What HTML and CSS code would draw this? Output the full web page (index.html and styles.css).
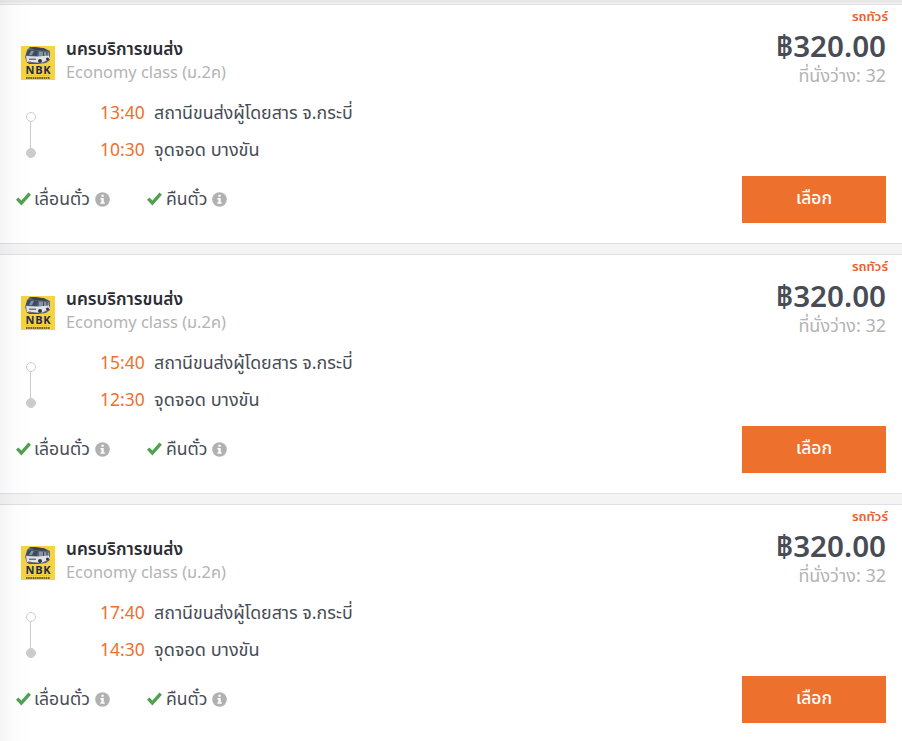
FILE: index.html
```
<!DOCTYPE html>
<html lang="th">
  <head>
    <meta charset="utf-8">
    <title>นครบริการขนส่ง</title>
    <link rel="stylesheet" href="styles.css">
  </head>
  <body>
    <svg class="symbols" width="0" height="0">
      <symbol id="logo" viewBox="0 0 34 34">
        <rect width="34" height="34" fill="#f6d342"/>
        <path d="M6 4 9 1 23 2 29 5 29 14 25 17 17 18 6 17 4 11z" fill="#5b6674"/>
        <path d="M8 1.5 14 1 23 2.5 27 5 14 4z" fill="#39414f"/>
        <path d="M7 4 17 5 16 10 5 9z" fill="#3b4a5f"/>
        <path d="M10 5 13 5 11 9 8 9z" fill="#8493a3"/>
        <path d="M18 5.500 28 6.500 28 9.500 18 10z" fill="#8796a5"/>
        <path d="M22 6h1v4h-1zM25.500 6h1v4h-1z" fill="#38455a"/>
        <path d="M5 10 16 10.500 28 9.500 29 13 20 17 6 16z" fill="#e2e3e5"/>
        <path d="M8 12.500h7v1.500H8z" fill="#6b7684"/>
        <path d="M6 16 18 17v1H8z" fill="#4d505b"/>
        <circle cx="19" cy="15" r="2" fill="#2e3443"/>
        <circle cx="26.500" cy="13" r="1.500" fill="#2e3443"/>
        <path d="M7 15.500h3v1H7z" fill="#d05d35"/>
        <text x="4.500" y="28" class="logo-name" textLength="25">NBK</text>
        <path d="M5 29.500h24" stroke="#d6b844" stroke-width=".6"/>
        <path d="M5 32h24" stroke="#6b6040" stroke-width="1.800" stroke-dasharray="1.600 .6"/>
      </symbol>
      <symbol id="check" viewBox="0 0 15 14">
        <path d="M0 7.800 2.400 5.400 5.400 8.400 12.400 .6 15 2.800 5.400 13.400z" fill="#4fa34f"/>
      </symbol>
      <symbol id="info" viewBox="0 0 15 15">
        <circle cx="7.500" cy="7.500" r="7.300" fill="#b1b1b1"/>
        <path d="M6.400 2.700h2.300v2H6.400zM5.400 5.900h3.300v4.400h1v1.500H5.400v-1.500h1V7.400h-1z" fill="#fff"/>
      </symbol>
    </svg>

    <div class="trip">
      <div class="trip-info">
        <div class="company">
          <svg class="logo"><use href="#logo"/></svg>
          <div>
            <div class="company-name"><span>นครบริการขนส่ง</span></div>
            <div class="bus-class">Economy class (ม.2ค)</div>
          </div>
        </div>
        <div class="route">
          <div class="line"></div>
          <dl class="stops">
            <dt>13:40</dt>
            <dd class="from">สถานีขนส่งผู้โดยสาร จ.กระบี่</dd>
            <dt>10:30</dt>
            <dd class="to">จุดจอด บางขัน</dd>
          </dl>
        </div>
        <div class="options">
          <div class="option move"><svg class="check"><use href="#check"/></svg><span>เลื่อนตั๋ว</span><svg class="info"><use href="#info"/></svg></div>
          <div class="option refund"><svg class="check"><use href="#check"/></svg><span>คืนตั๋ว</span><svg class="info"><use href="#info"/></svg></div>
        </div>
      </div>
      <div class="trip-price">
        <div class="bus-type">รถทัวร์</div>
        <div class="price">฿320.00</div>
        <div class="seats">ที่นั่งว่าง: 32</div>
        <button type="button">เลือก</button>
      </div>
    </div>

    <div class="trip">
      <div class="trip-info">
        <div class="company">
          <svg class="logo"><use href="#logo"/></svg>
          <div>
            <div class="company-name"><span>นครบริการขนส่ง</span></div>
            <div class="bus-class">Economy class (ม.2ค)</div>
          </div>
        </div>
        <div class="route">
          <div class="line"></div>
          <dl class="stops">
            <dt>15:40</dt>
            <dd class="from">สถานีขนส่งผู้โดยสาร จ.กระบี่</dd>
            <dt>12:30</dt>
            <dd class="to">จุดจอด บางขัน</dd>
          </dl>
        </div>
        <div class="options">
          <div class="option move"><svg class="check"><use href="#check"/></svg><span>เลื่อนตั๋ว</span><svg class="info"><use href="#info"/></svg></div>
          <div class="option refund"><svg class="check"><use href="#check"/></svg><span>คืนตั๋ว</span><svg class="info"><use href="#info"/></svg></div>
        </div>
      </div>
      <div class="trip-price">
        <div class="bus-type">รถทัวร์</div>
        <div class="price">฿320.00</div>
        <div class="seats">ที่นั่งว่าง: 32</div>
        <button type="button">เลือก</button>
      </div>
    </div>

    <div class="trip">
      <div class="trip-info">
        <div class="company">
          <svg class="logo"><use href="#logo"/></svg>
          <div>
            <div class="company-name"><span>นครบริการขนส่ง</span></div>
            <div class="bus-class">Economy class (ม.2ค)</div>
          </div>
        </div>
        <div class="route">
          <div class="line"></div>
          <dl class="stops">
            <dt>17:40</dt>
            <dd class="from">สถานีขนส่งผู้โดยสาร จ.กระบี่</dd>
            <dt>14:30</dt>
            <dd class="to">จุดจอด บางขัน</dd>
          </dl>
        </div>
        <div class="options">
          <div class="option move"><svg class="check"><use href="#check"/></svg><span>เลื่อนตั๋ว</span><svg class="info"><use href="#info"/></svg></div>
          <div class="option refund"><svg class="check"><use href="#check"/></svg><span>คืนตั๋ว</span><svg class="info"><use href="#info"/></svg></div>
        </div>
      </div>
      <div class="trip-price">
        <div class="bus-type">รถทัวร์</div>
        <div class="price">฿320.00</div>
        <div class="seats">ที่นั่งว่าง: 32</div>
        <button type="button">เลือก</button>
      </div>
    </div>
  </body>
</html>
```
FILE: styles.css
```
*,
*::before,
*::after {
  box-sizing: border-box;
}

html {
  overflow: hidden;
}

body {
  margin: 0;
  padding-top: 4px;
  height: 741px;
  overflow: hidden;
  background: linear-gradient(#e8e8e8, #e8e8e8) 0 0 / 100% 3px no-repeat #f4f4f4;
  color: #474c55;
  font-family: "Noto Sans", "Noto Sans Thai", sans-serif;
  font-size: 17px;
}

/* soft shadow falling in from the left column */
body::after {
  content: "";
  position: absolute;
  top: 0;
  left: 0;
  width: 36px;
  height: 741px;
  background: linear-gradient(to right, rgba(0, 0, 0, .04), rgba(0, 0, 0, .012) 40%, rgba(0, 0, 0, 0));
  pointer-events: none;
}

.symbols {
  display: none;
}

.trip {
  display: flex;
  justify-content: space-between;
  height: 240px;
  margin-bottom: 10px;
  border-top: 1px solid #dfdfe5;
  border-bottom: 1px solid #dfdfe5;
  background: #fff;
  white-space: nowrap;
}

.trip-info {
  padding: 32px 0 0 16px;
}

.company {
  display: flex;
  height: 56px;
}

.logo {
  width: 34px;
  height: 34px;
  margin: 9px 11px 0 5px;
}

.logo-name {
  fill: #202b4b;
  font: bold 11px "Open Sans", sans-serif;
}

.company-name {
  height: 24px;
  line-height: 24px;
  color: #2b2d33;
  font-size: 17.2px;
  font-weight: 600;
}

.bus-class {
  height: 24px;
  line-height: 21px;
  color: #b3b3b3;
  font-size: 16.4px;
}

.route {
  display: flex;
  height: 92px;
}

/* hollow dot, line, filled dot */
.line {
  position: relative;
  width: 1px;
  height: 36px;
  margin: 24px 69px 0 14px;
  background: #ccc;
}

.line::before,
.line::after {
  content: "";
  position: absolute;
  left: -4px;
  width: 10px;
  height: 10px;
  border: 1px solid #ccc;
  border-radius: 50%;
}

.line::before {
  top: -5px;
  background: #fff;
}

.line::after {
  bottom: -5px;
  background: #ccc;
}

.stops {
  display: grid;
  grid-template-columns: 54px auto;
  grid-auto-rows: 37px;
  margin: 0;
  line-height: 38px;
}

dt {
  color: #ed702d;
  font-size: 17.5px;
}

dd {
  margin: 0;
  font-size: 17.8px;
}

.to {
  font-size: 18.1px;
}

.options {
  display: flex;
  height: 30px;
  line-height: 26px;
}

.option {
  display: flex;
  font-size: 17.6px;
}

.move {
  width: 131px;
}

.check {
  width: 15px;
  height: 14px;
  margin: 7px 4px 0 0;
}

.move .check {
  margin-right: 3px;
}

.info {
  width: 15px;
  height: 15px;
  margin: 7px 0 0 5px;
}

.trip-price {
  display: flex;
  flex-direction: column;
  align-items: flex-end;
  padding-right: 16px;
}

.bus-type {
  height: 24px;
  margin-right: -2px;
  line-height: 22px;
  color: #ed602d;
  font-size: 13px;
  font-weight: 600;
}

.price {
  height: 36px;
  line-height: 34px;
  font-size: 29.6px;
  font-weight: 600;
}

.seats {
  height: 24px;
  line-height: 20px;
  color: #b3b3b3;
  font-size: 18px;
}

button {
  width: 144px;
  height: 47px;
  margin-top: 87px;
  padding: 0 0 2px;
  border: none;
  background: #ed702d;
  color: #fff;
  font: 500 17.5px "Noto Sans", "Noto Sans Thai", sans-serif;
}
```
